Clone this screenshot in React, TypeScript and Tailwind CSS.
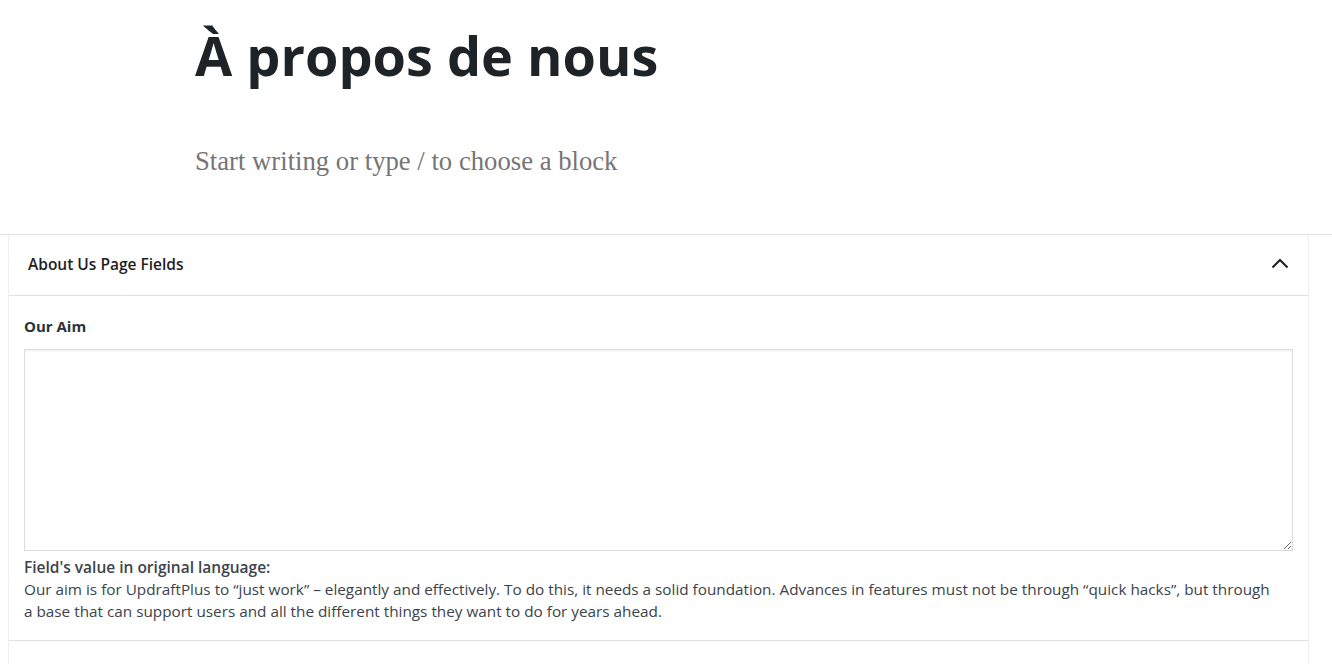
import React from 'react';

export default function App() {
  return (
    <div className="min-h-[664px] bg-white text-[#1e1e1e]" style={{ fontFamily: '"Open Sans", "Noto Sans", sans-serif' }}>
      {/* editor canvas */}
      <div className="pl-[195px] pt-[18px] h-[234px]">
        <h1 className="text-[54px] leading-[74px] font-bold text-[#1d2327]">À propos de nous</h1>
        <p
          className="mt-[50px] text-[26.7px] leading-[38px] text-[#757575]"
          style={{ fontFamily: '"Liberation Serif", "DejaVu Serif", serif' }}
        >
          Start writing or type / to choose a block
        </p>
      </div>

      {/* meta box area */}
      <div className="border-t border-[#e0e0e0] pl-[8px] pr-[23px]">
        <div className="border-x border-[#f0f0f0] bg-white">
          <div className="h-[61px] flex items-center justify-between pl-[19px] pr-[16px] border-b border-[#e0e0e0]">
            <h2 className="text-[15.5px] font-semibold text-[#1e1e1e]">About Us Page Fields</h2>
            <svg width="24" height="24" viewBox="0 0 24 24" className="text-[#1e1e1e] -mt-[2px]">
              <path d="M4.5 15.5 12 8l7.5 7.5" fill="none" stroke="currentColor" strokeWidth="2" />
            </svg>
          </div>
          <div className="pl-[15px] pr-[15px] pt-[19px] pb-[18px] border-b border-[#e0e0e0] text-[15.3px] text-[#3c434a]">
            <label className="block text-[15px] font-bold leading-[22px] mb-[12px] text-[#2c3338]">Our Aim</label>
            <textarea
              className="block w-full h-[202px] border border-[#dcdcde] rounded-none shadow-[inset_0_1px_2px_rgba(0,0,0,0.07)] resize-y"
            />
            <div className="mt-[5px] leading-[22px]">
              <div className="font-semibold text-[15.5px]">Field's value in original language:</div>
              <div className="max-w-[1252px]">
                Our aim is for UpdraftPlus to “just work” – elegantly and effectively. To do this, it needs a solid foundation. Advances in features must not be through “quick hacks”, but through a base that can support users and all the different things they want to do for years ahead.
              </div>
            </div>
          </div>
          <div className="h-[24px]" />
        </div>
      </div>
    </div>
  );
}
